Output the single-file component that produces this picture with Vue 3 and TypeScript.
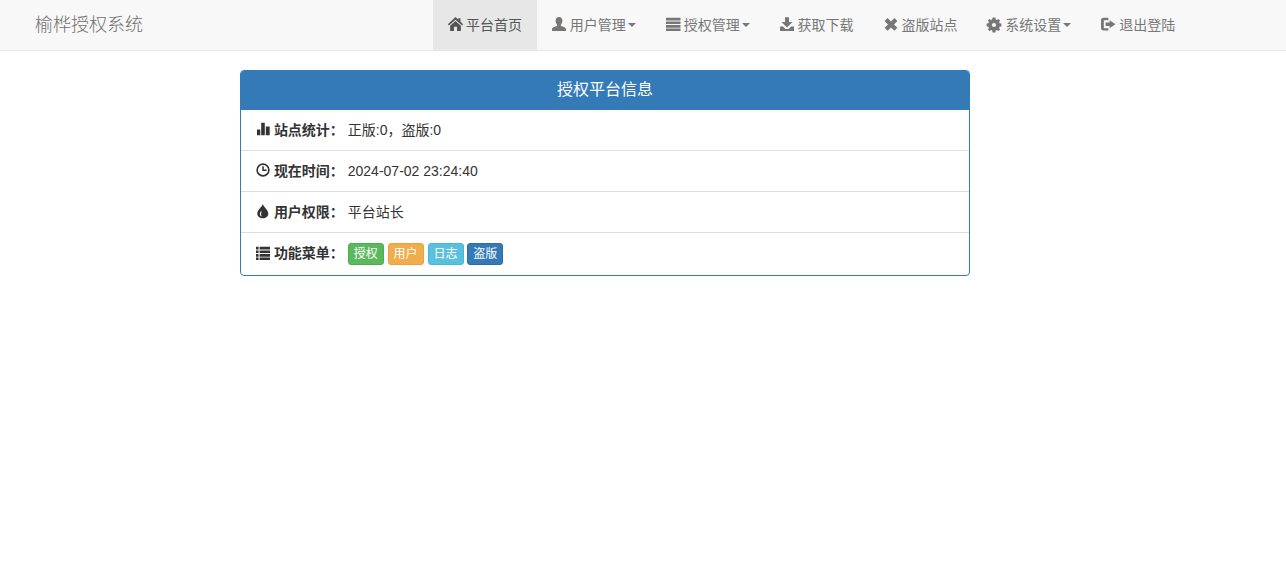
<script setup lang="ts">
interface NavItem { label: string; icon: string; caret?: boolean; active?: boolean }
const icons: Record<string, string> = {
  home: 'M7.5 .1 10.3 2.6V1.2H12.4V4.5L15.1 7.2 14.1 8.4 7.5 2.7 .9 8.4-.1 7.2ZM7.5 4.1 12.9 8.8V14H9V9.8H6V14H2.1V8.8Z',
  user: 'M7 0C9.2 0 10.4 1.6 10.4 3.8 10.4 5.6 9.6 7 8.9 7.7V9C10.8 9.8 14 10.2 14 12V14H0V12C0 10.2 3.2 9.8 5.1 9V7.7C4.4 7 3.6 5.6 3.6 3.8 3.6 1.6 4.8 0 7 0Z',
  bars: 'M0 .8H14.5V3.5H0ZM0 4.4H14.5V7.1H0ZM0 8H14.5V10.7H0ZM0 11.5H14.5V14H0Z',
  download: 'M5 .3H9V5H12.5L7 10.5 1.5 5H5ZM0 9.5H3L5.5 12H8.5L11 9.5H14V14H0Z',
  remove: 'M3.6 1 7 4.4 10.4 1 13.4 4 10 7.4 13.4 10.8 10.4 13.8 7 10.4 3.6 13.8 .6 10.8 4 7.4 .6 4Z',
  cog: 'M5.6.6H8.4L8.8 2.4 9.9 2.9 11.5 1.9 13.1 3.5 12.1 5.1 12.6 6.2 14.4 6.6V9.4L12.6 9.8 12.1 10.9 13.1 12.5 11.5 14.1 9.9 13.1 8.8 13.6 8.4 15.4H5.6L5.2 13.6 4.1 13.1 2.5 14.1.9 12.5 1.9 10.9 1.4 9.8-.4 9.4V6.6L1.4 6.2 1.9 5.1.9 3.5 2.5 1.9 4.1 2.9 5.2 2.4ZM7 5.9A2.1 2.1 0 1 0 7 10.1 2.1 2.1 0 1 0 7 5.9Z',
  logout: 'M2.5.8H7.4V3.2H3.4C3 3.2 2.8 3.4 2.8 3.8V10.6C2.8 11 3 11.2 3.4 11.2H7.4V13.6H2.5C1 13.6 0 12.6 0 11.1V3.3C0 1.8 1 .8 2.5.8ZM8.6 3.2 14.4 7.2 8.6 11.2V9H4.6V5.4H8.6Z',
  stats: 'M1 7.5H4.3V13.3H1ZM5.2 .8H8.8V13.3H5.2ZM9.8 4.5H13.7V13.3H9.8Z',
  time: 'M7 .3A6.7 6.7 0 1 1 7 13.7 6.7 6.7 0 1 1 7 .3ZM7 1.9A5.1 5.1 0 1 0 7 12.1 5.1 5.1 0 1 0 7 1.9ZM6.3 3.3H7.8V6.4H10.6V7.9H6.3Z',
  tint: 'M6.8 0C7.4 2.8 12.3 6 12.3 9.4 12.3 12.2 9.9 14.2 6.8 14.2S1.3 12.2 1.3 9.4C1.3 6 6.2 2.8 6.8 0ZM4.9 7.6C3.7 9 3.5 10.6 4.6 12 5.3 12.7 6 12.7 5.5 11.8 4.8 10.6 5 9.1 5.5 8 5.7 7.3 5.4 7 4.9 7.6Z',
  list: 'M0 .8H2.6V3.5H0ZM3.6 .8H14V3.5H3.6ZM0 4.4H2.6V7.1H0ZM3.6 4.4H14V7.1H3.6ZM0 8H2.6V10.7H0ZM3.6 8H14V10.7H3.6ZM0 11.5H2.6V14H0ZM3.6 11.5H14V14H3.6Z',
}
const nav: NavItem[] = [
  { label: '平台首页', icon: 'home', active: true },
  { label: '用户管理', icon: 'user', caret: true },
  { label: '授权管理', icon: 'bars', caret: true },
  { label: '获取下载', icon: 'download' },
  { label: '盗版站点', icon: 'remove' },
  { label: '系统设置', icon: 'cog', caret: true },
  { label: '退出登陆', icon: 'logout' },
]
const rows = [
  { label: '站点统计：', icon: 'stats', value: '正版:0，盗版:0' },
  { label: '现在时间：', icon: 'time', value: '2024-07-02 23:24:40' },
  { label: '用户权限：', icon: 'tint', value: '平台站长' },
]
const tags = [
  { text: '授权', color: 'green' },
  { text: '用户', color: 'orange' },
  { text: '日志', color: 'cyan' },
  { text: '盗版', color: 'blue' },
]
</script>

<template>
  <div class="page">
    <header class="navbar">
      <a class="brand">榆桦授权系统</a>
      <nav class="nav">
        <a v-for="item in nav" :key="item.label" class="nav-item" :class="{ active: item.active }">
          <svg class="icon" viewBox="0 0 14 14"><path :d="icons[item.icon]" /></svg>
          <span>{{ item.label }}</span>
          <i v-if="item.caret" class="caret"></i>
        </a>
      </nav>
    </header>
    <main class="content">
      <section class="panel">
        <h3 class="panel-heading">授权平台信息</h3>
        <div v-for="row in rows" :key="row.label" class="row">
          <svg class="icon" viewBox="0 0 14 14"><path :d="icons[row.icon]" /></svg>
          <b class="label">{{ row.label }}</b>
          <span>{{ row.value }}</span>
        </div>
        <div class="row last">
          <svg class="icon" viewBox="0 0 14 14"><path :d="icons.list" /></svg>
          <b class="label">功能菜单：</b>
          <span class="tags">
            <a v-for="tag in tags" :key="tag.text" class="tag" :class="tag.color">{{ tag.text }}</a>
          </span>
        </div>
      </section>
    </main>
  </div>
</template>

<style>
body { margin: 0; background: #fff; }
</style>

<style scoped>
.page {
  font-family: "Liberation Sans", "Noto Sans CJK SC", sans-serif;
  font-size: 14px;
  line-height: 20px;
  color: #333;
}
.navbar {
  display: flex;
  justify-content: space-between;
  box-sizing: border-box;
  height: 51px;
  background: #f8f8f8;
  border-bottom: 1px solid #e7e7e7;
  padding-left: 35px;
}
.brand {
  font-size: 18px;
  line-height: 50px;
  font-weight: 300;
  color: #6e6e6e;
}
.nav {
  display: flex;
  margin-right: 95.77px;
}
.nav-item {
  display: flex;
  align-items: center;
  height: 50px;
  padding: 0 15px;
  color: #777;
}
.nav-item.active {
  background: #e7e7e7;
  color: #555;
}
.nav-item .icon { margin-right: 3.89px; }
.icon {
  width: 14px;
  height: 14px;
  margin-bottom: 2px;
  flex: none;
  fill: currentColor;
  overflow: visible;
}
.caret {
  width: 0;
  height: 0;
  margin-left: 2px;
  border-top: 4px solid;
  border-left: 4px solid transparent;
  border-right: 4px solid transparent;
}
.content {
  display: flex;
  padding: 19px 0 0 240px;
}
.panel {
  box-sizing: border-box;
  width: 730px;
  border: 1px solid #337ab7;
  border-radius: 4px;
  overflow: hidden;
}
.panel-heading {
  margin: 0;
  height: 39px;
  background: #337ab7;
  color: #fff;
  font-size: 16px;
  font-weight: 400;
  line-height: 37px;
  text-align: center;
}
.row {
  display: flex;
  align-items: center;
  height: 40px;
  padding: 0 15px;
  border-bottom: 1px solid #ddd;
}
.row.last {
  height: auto;
  align-items: flex-start;
  padding: 10px 15px;
  border-bottom: 0;
}
.row .icon { margin-right: 3.89px; }
.row.last .icon { margin-top: 3px; margin-bottom: 0; }
.label {
  margin-right: 3.89px;
  font-weight: 700;
}
.tags {
  display: flex;
  gap: 3.89px;
}
.tag {
  box-sizing: border-box;
  width: 36px;
  height: 22px;
  border-radius: 3px;
  color: #fff;
  font-size: 12px;
  line-height: 20px;
  text-align: center;
  border: 1px solid;
}
.green { background: #5cb85c; border-color: #4cae4c; }
.orange { background: #f0ad4e; border-color: #eea236; }
.cyan { background: #5bc0de; border-color: #46b8da; }
.blue { background: #337ab7; border-color: #2e6da4; }
</style>
